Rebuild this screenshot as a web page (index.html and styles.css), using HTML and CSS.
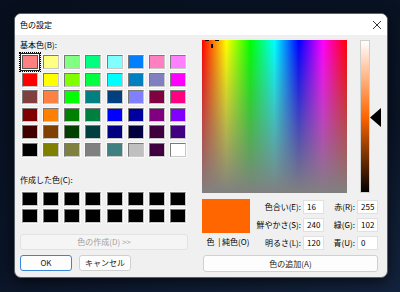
FILE: index.html
```html
<!DOCTYPE html>
<html lang="ja">
<head>
    <meta charset="UTF-8">
    <title>色の設定</title>
    <link rel="stylesheet" href="styles.css">
</head>
<body>
    <div class="dialog">
        <div class="titlebar">
            <span class="title">色の設定</span>
            <svg class="close" width="10" height="10" viewBox="0 0 10 10">
                <path d="M1 1 L9 9 M9 1 L1 9" stroke="#333" stroke-width="1" fill="none"/>
            </svg>
        </div>

        <div class="content">
            <div class="left">
                <div class="label">基本色(B):</div>
                <div class="swatches" id="basic"></div>

                <div class="label custom-label">作成した色(C):</div>
                <div class="swatches custom" id="custom"></div>

                <button class="btn wide disabled">色の作成(D) &gt;&gt;</button>
                <div class="btn-row">
                    <button class="btn small focus">OK</button>
                    <button class="btn small">キャンセル</button>
                </div>
            </div>

            <div class="right">
                <div class="picker">
                    <div class="spectrum">
                        <span class="cross h1"></span>
                        <span class="cross h2"></span>
                        <span class="cross v1"></span>
                    </div>
                    <div class="lum-wrap">
                        <div class="lum"></div>
                        <svg class="arrow" width="11" height="19" viewBox="0 0 11 19">
                            <path d="M11 0 L0 9.5 L11 19 Z" fill="#000"/>
                        </svg>
                    </div>
                </div>

                <div class="values">
                    <div class="preview-col">
                        <div class="preview"></div>
                        <div class="preview-label">色&nbsp;&nbsp;| 純色(O)</div>
                    </div>
                    <div class="fields">
                        <label>色合い(E):</label><span class="input">16</span>
                        <label>赤(R):</label><span class="input">255</span>
                        <label>鮮やかさ(S):</label><span class="input">240</span>
                        <label>緑(G):</label><span class="input">102</span>
                        <label>明るさ(L):</label><span class="input">120</span>
                        <label>青(U):</label><span class="input">0</span>
                    </div>
                </div>

                <button class="btn add">色の追加(A)</button>
            </div>
        </div>
    </div>

    <script>
        const basicColors = [
            '#FF8080', '#FFFF80', '#80FF80', '#00FF80', '#80FFFF', '#0080FF', '#FF80C0', '#FF80FF',
            '#FF0000', '#FFFF00', '#80FF00', '#00FF40', '#00FFFF', '#0080C0', '#8080C0', '#FF00FF',
            '#804040', '#FF8040', '#00FF00', '#008080', '#004080', '#8080FF', '#800040', '#FF0080',
            '#800000', '#FF8000', '#008000', '#008040', '#0000FF', '#0000A0', '#800080', '#8000FF',
            '#400000', '#804000', '#004000', '#004040', '#000080', '#000040', '#400040', '#400080',
            '#000000', '#808000', '#808040', '#808080', '#408080', '#C0C0C0', '#400040', '#FFFFFF'
        ];

        const basic = document.getElementById('basic');
        basicColors.forEach(function(c, i) {
            const s = document.createElement('div');
            s.className = i === 0 ? 'swatch selected' : 'swatch';
            s.style.background = c;
            basic.appendChild(s);
        });

        const custom = document.getElementById('custom');
        for (let i = 0; i < 16; i++) {
            const s = document.createElement('div');
            s.className = 'swatch';
            s.style.background = '#000';
            custom.appendChild(s);
        }
    </script>
</body>
</html>
```

FILE: styles.css
```css
* {
    margin: 0;
    padding: 0;
    box-sizing: border-box;
    font-family: "Noto Sans CJK JP", "Noto Sans", sans-serif;
}

body {
    width: 400px;
    height: 292px;
    overflow: hidden;
    background: linear-gradient(160deg, #08101f 0%, #0a1426 60%, #13233d 100%);
    padding: 13px 0 0 14px;
}

.dialog {
    width: 374px;
    height: 265px;
    background-color: #f0f0f0;
    border: 1px solid #5a606a;
    border-radius: 7px;
    overflow: hidden;
    box-shadow: 0 4px 14px rgba(0, 0, 0, 0.6);
    font-size: 8px;
    color: #000;
}

.titlebar {
    height: 21px;
    background-color: #fff;
    display: flex;
    align-items: center;
    justify-content: space-between;
    padding: 0 5px 0 5px;
}

.title {
    font-size: 8px;
    line-height: 1;
}

.content {
    display: flex;
    padding: 0 5px;
}

.left {
    width: 168px;
}

.label {
    height: 10px;
    line-height: 10px;
    margin-top: 5px;
}

.swatches {
    display: grid;
    grid-template-columns: repeat(8, 16px);
    grid-auto-rows: 14px;
    column-gap: 5.14px;
    row-gap: 3.6px;
    padding-left: 2px;
    margin-top: 5px;
}

.swatch {
    border: 1px solid;
    border-color: #7a7a7a #c8c8c8 #c8c8c8 #7a7a7a;
    box-shadow: 0 0 0 1px #fafafa;
}

.swatch.selected {
    border-color: #555;
    box-shadow: 0 0 0 1px #fafafa, 0 0 0 2px #222;
    outline: 1px dotted #000;
    outline-offset: 2px;
}

.custom-label {
    margin-top: 18px;
}

.custom {
    margin-top: 7px;
    row-gap: 3px;
}

.btn {
    display: flex;
    align-items: center;
    justify-content: center;
    background-color: #fdfdfd;
    border: 1px solid #d0d0d0;
    border-radius: 3px;
    font-size: 8px;
    color: #1a1a1a;
    height: 16px;
}

.btn.wide {
    width: 168px;
    margin-top: 11px;
}

.btn.disabled {
    background-color: #f5f5f5;
    border-color: #e2e2e2;
    color: #a0a0a0;
}

.btn-row {
    display: flex;
    gap: 7px;
    margin-top: 5px;
}

.btn.small {
    width: 52px;
}

.btn.focus {
    border-color: #3a86d6;
}

.right {
    margin-left: 14px;
    width: 180px;
}

.picker {
    display: flex;
    margin-top: 5px;
    height: 153px;
}

.spectrum {
    position: relative;
    width: 145px;
    height: 153px;
    background:
        linear-gradient(to bottom, rgba(128, 128, 128, 0), #808080),
        linear-gradient(to right, #ff0000, #ffff00 16.7%, #00ff00 33.3%, #00ffff 50%, #0000ff 66.7%, #ff00ff 83.3%, #ff0000);
}

.cross {
    position: absolute;
    background-color: #000;
}

.cross.h1 {
    left: 3px;
    top: 0;
    width: 4px;
    height: 1px;
}

.cross.h2 {
    left: 13px;
    top: 0;
    width: 4px;
    height: 1px;
}

.cross.v1 {
    left: 9px;
    top: 4px;
    width: 2px;
    height: 4px;
}

.lum-wrap {
    position: relative;
    margin-left: 13px;
    width: 22px;
}

.lum {
    width: 10px;
    height: 153px;
    border: 1px solid #cfcfcf;
    background: linear-gradient(to bottom, #ffffff, #ff6600 50%, #000000);
}

.arrow {
    position: absolute;
    left: 10px;
    top: 68px;
}

.values {
    display: flex;
    margin-top: 6px;
}

.preview-col {
    width: 48px;
}

.preview {
    width: 48px;
    height: 34px;
    background-color: #ff6600;
}

.preview-label {
    margin-top: 4px;
    text-align: center;
    white-space: nowrap;
    padding-left: 4px;
    line-height: 10px;
}

.fields {
    display: grid;
    grid-template-columns: 52px 21px 31px 21px;
    grid-auto-rows: 14px;
    row-gap: 4px;
    column-gap: 1px;
    margin-top: 1px;
}

.fields label {
    text-align: right;
    line-height: 14px;
    white-space: nowrap;
    padding-right: 1px;
}

.input {
    background-color: #fff;
    border: 1px solid #e0e0e0;
    padding-left: 3px;
    line-height: 12px;
}

.btn.add {
    width: 175px;
    height: 17px;
    margin-top: 5px;
    margin-left: 1px;
}
```
